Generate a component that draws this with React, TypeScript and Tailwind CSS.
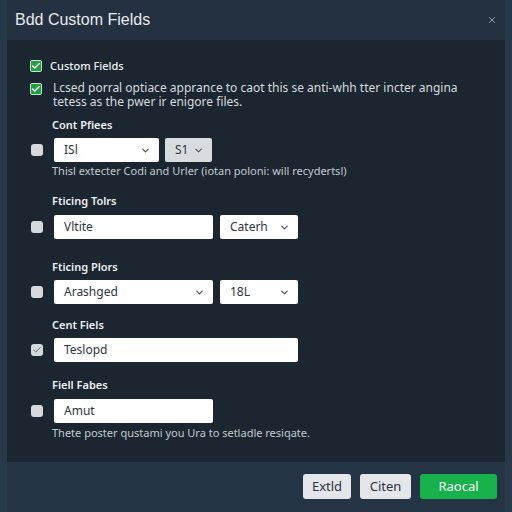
import React from 'react';
import { ChevronDown, Check, X } from 'lucide-react';

const font = { fontFamily: '"Noto Sans", "Open Sans", Arial, sans-serif' };

const Box = ({ state }: { state: 'green' | 'light' | 'off' }) => {
  if (state === 'green') {
    return (
      <span className="flex h-[12px] w-[12px] shrink-0 items-center justify-center rounded-[2px] border border-[#bfe8c9] bg-[#1f9e43]">
        <Check size={10} strokeWidth={3.5} className="text-white" />
      </span>
    );
  }
  return (
    <span className="flex h-[12px] w-[12px] shrink-0 items-center justify-center rounded-[3px] bg-[#d5d8dc]">
      {state === 'light' && <Check size={10} strokeWidth={2} className="text-[#4b5563]" />}
    </span>
  );
};

const Field = ({
  value,
  width,
  chevron,
  tone = 'white',
}: {
  value: string;
  width: string;
  chevron?: boolean;
  tone?: 'white' | 'gray';
}) => (
  <div
    className={`flex h-6 items-center justify-between rounded-[2px] pl-[10px] pr-[8px] text-[12px] text-[#2d3540] ${width} ${
      tone === 'gray' ? 'bg-[#d9dcdf]' : 'bg-white'
    }`}
  >
    <span>{value}</span>
    {chevron && <ChevronDown size={11} strokeWidth={2.5} className="text-[#4b5563]" />}
  </div>
);

const Label = ({ children, className = '' }: { children: React.ReactNode; className?: string }) => (
  <div className={`pl-[45px] text-[11px] font-semibold leading-[14px] text-[#eef0f2] ${className}`}>{children}</div>
);

const Helper = ({ children, className = '' }: { children: React.ReactNode; className?: string }) => (
  <div className={`pl-[45px] text-[11px] leading-[14px] text-[#c3c8ce] ${className}`}>{children}</div>
);

export default function App() {
  return (
    <div className="h-[512px] w-[512px] overflow-hidden bg-[#283949] px-[7px]" style={font}>
      <div className="flex h-full flex-col">
        {/* header */}
        <div className="flex h-10 items-center justify-between bg-[#233140] pl-2 pr-[8px]">
          <h1 className="font-['Liberation_Sans',Arial,sans-serif] text-[16px] leading-none text-[#e8eaed]">
            Bdd Custom Fields
          </h1>
          <X size={10} strokeWidth={2} className="text-[#aab2bb]" />
        </div>

        {/* body */}
        <div className="flex h-[422px] flex-col bg-[#1b2631]">
          <div className="mt-[20px] flex items-center gap-[8px] pl-[23px]">
            <Box state="green" />
            <span className="text-[11px] font-medium leading-[12px] text-[#eef0f2]">Custom Fields</span>
          </div>
          <div className="mt-[9px] flex items-start gap-[11px] pl-[23px]">
            <span className="mt-[2px]">
              <Box state="green" />
            </span>
            <p className="text-[12px] leading-[14px] text-[#d6dade]">
              Lcsed porral optiace apprance to caot this se anti-whh tter incter angina
              <br />
              tetess as the pwer ir enigore files.
            </p>
          </div>

          <Label className="mt-[9px]">Cont Pfiees</Label>
          <div className="mt-[6px] flex items-center gap-[11px] pl-[24px]">
            <Box state="off" />
            <div className="flex gap-[6px]">
              <Field value="ISl" width="w-[105px]" chevron />
              <Field value="S1" width="w-[47px]" chevron tone="gray" />
            </div>
          </div>
          <Helper className="mt-[2px]">Thisl extecter Codi and Urler (iotan poloni: will recydertsl)</Helper>

          <Label className="mt-[16px]">Fticing Tolrs</Label>
          <div className="mt-[7px] flex items-center gap-[11px] pl-[24px]">
            <Box state="off" />
            <div className="flex gap-[7px]">
              <Field value="Vltite" width="w-[159px]" />
              <Field value="Caterh" width="w-[78px]" chevron />
            </div>
          </div>

          <Label className="mt-[21px]">Fticing Plors</Label>
          <div className="mt-[6px] flex items-center gap-[11px] pl-[24px]">
            <Box state="off" />
            <div className="flex gap-[7px]">
              <Field value="Arashged" width="w-[159px]" chevron />
              <Field value="18L" width="w-[78px]" chevron />
            </div>
          </div>

          <Label className="mt-[14px]">Cent Fiels</Label>
          <div className="mt-[6px] flex items-center gap-[11px] pl-[24px]">
            <Box state="light" />
            <Field value="Teslopd" width="w-[244px]" />
          </div>

          <Label className="mt-[16px]">Fiell Fabes</Label>
          <div className="mt-[7px] flex items-center gap-[11px] pl-[24px]">
            <Box state="off" />
            <Field value="Amut" width="w-[159px]" />
          </div>
          <Helper className="mt-[3px]">Thete poster qustami you Ura to setladle resiqate.</Helper>
        </div>

        {/* footer */}
        <div className="flex flex-1 items-start justify-end gap-[9px] bg-[#243444] pr-[8px] pt-[12px]">
          <button className="h-[25px] w-[48px] rounded-[3px] bg-[#e4e6e9] text-[13px] text-[#2b3440]">Extld</button>
          <button className="h-[25px] w-[51px] rounded-[3px] bg-[#e4e6e9] text-[13px] text-[#2b3440]">Citen</button>
          <button className="h-[25px] w-[77px] rounded-[3px] bg-[#17b24c] text-[13px] text-white">Raocal</button>
        </div>
      </div>
    </div>
  );
}
